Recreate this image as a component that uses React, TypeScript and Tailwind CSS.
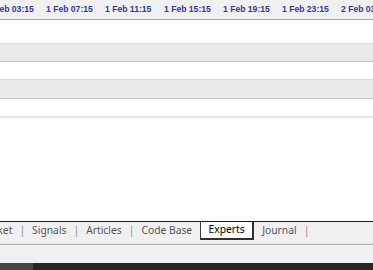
import React from 'react';

const times = ['1 Feb 03:15', '1 Feb 07:15', '1 Feb 11:15', '1 Feb 15:15', '1 Feb 19:15', '1 Feb 23:15', '2 Feb 03:15'];

const Sep: React.FC = () => <span className="px-[7px] text-[#8a8a8a]">|</span>;

const App: React.FC = () => {
  return (
    <div className="w-[373px] h-[270px] overflow-hidden flex flex-col bg-white" style={{ fontFamily: '"Noto Sans", sans-serif' }}>
      {/* time axis */}
      <div className="h-[20px] shrink-0 bg-[#f0f0f0] border-b border-[#a8a8a8] flex items-center overflow-hidden">
        <div className="flex gap-[13px] ml-[-13px] whitespace-nowrap" style={{ fontFamily: '"Liberation Sans", sans-serif' }}>
          {times.map((t) => (
            <span key={t} className="w-[46px] shrink-0 text-[8.6px] font-bold text-[#3434a8] leading-none">
              {t}
            </span>
          ))}
        </div>
      </div>

      {/* rows */}
      <div className="h-[23px] shrink-0 bg-white" />
      <div className="h-[19px] shrink-0 bg-[#e9e9e9] border-t border-b border-t-[#dedede] border-b-[#c6c6c6]" />
      <div className="h-[17px] shrink-0 bg-white" />
      <div className="h-[20px] shrink-0 bg-[#e9e9e9] border-t border-b border-t-[#dadada] border-b-[#c6c6c6]" />
      <div className="h-[17px] shrink-0 bg-white" />
      <div className="h-[2px] shrink-0 bg-[#e4e4e4]" />
      <div className="flex-1 bg-white" />

      {/* terminal tabs */}
      <div className="shrink-0 border-t border-[#1a1a1a] bg-[#f0f0f0]">
        <div className="h-[22px] flex items-start text-[10.3px] text-[#555555] whitespace-nowrap overflow-hidden">
          <div className="flex items-center h-[18px] ml-[-22px]">
            <span>Market</span>
            <Sep />
            <span>Signals</span>
            <Sep />
            <span>Articles</span>
            <Sep />
            <span>Code Base</span>
          </div>
          <div className="ml-[8px] mt-[-2px] h-[20px] w-[54px] bg-white border-l border-r-2 border-b-2 border-l-[#404040] border-r-[#303030] border-b-[#303030] border-t border-t-[#1a1a1a] flex items-center justify-center text-black">
            Experts
          </div>
          <div className="flex items-center h-[18px] pl-[8px]">
            <span>Journal</span>
            <Sep />
          </div>
        </div>
        <div className="h-[1px] bg-[#a6a6a6]" />
        <div className="h-[1px] bg-white" />
        <div className="h-[17px] bg-[#f0f0f0]" />
        <div className="h-[7px] flex">
          <div className="w-[33px] bg-[#4a4541]" />
          <div className="flex-1 bg-[#2a2521]" />
        </div>
      </div>
    </div>
  );
};

export default App;
